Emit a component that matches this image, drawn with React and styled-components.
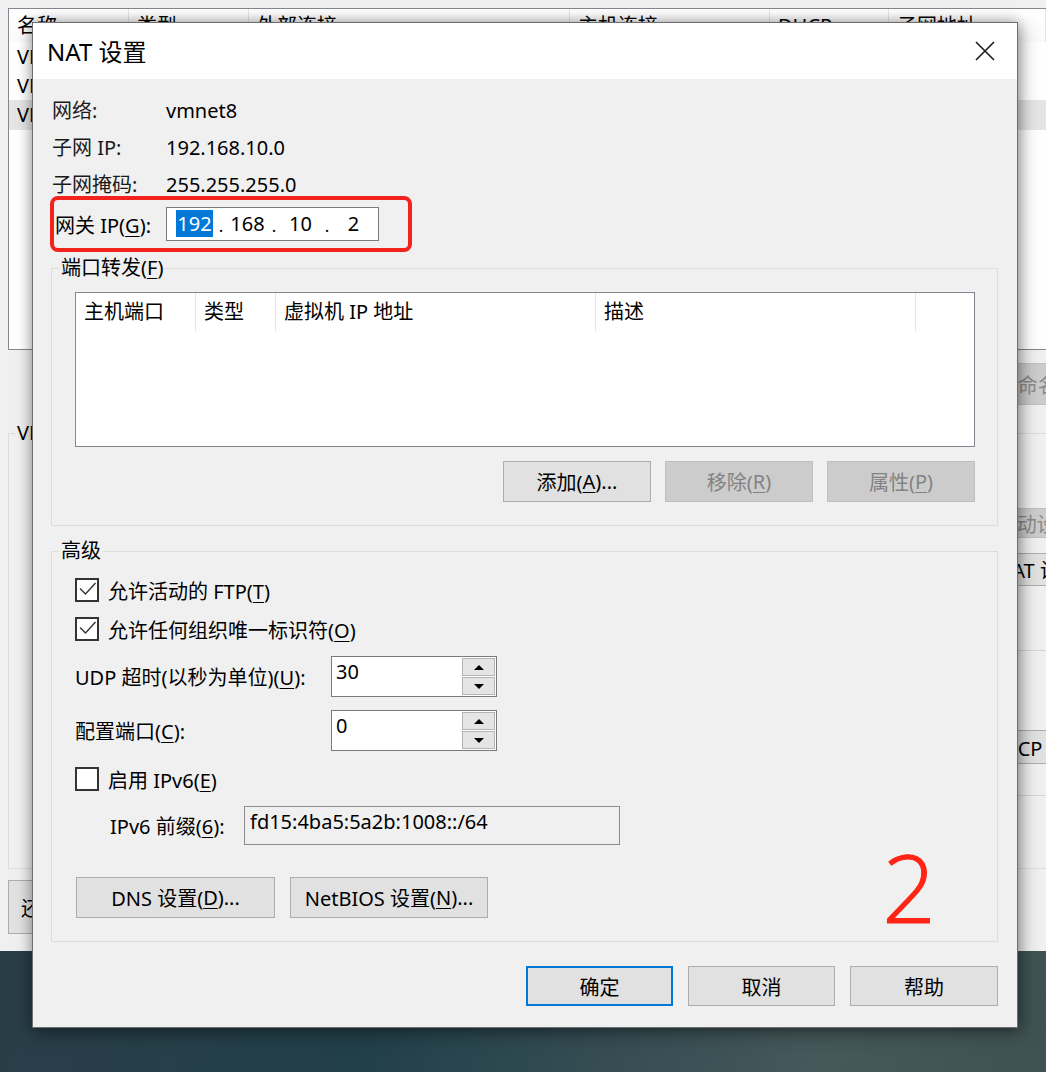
import React from 'react';
import styled, { createGlobalStyle } from 'styled-components';

const GlobalStyle = createGlobalStyle`
  html, body {
    margin: 0;
    padding: 0;
  }
  body {
    width: 1046px;
    height: 1072px;
    overflow: hidden;
    font-family: "Noto Sans", "Noto Sans CJK SC", sans-serif;
    font-size: 20px;
    color: #000;
    background: linear-gradient(95deg, #2b3d47 0%, #22404a 40%, #46585a 80%, #3f5252 100%);
  }
  * {
    box-sizing: border-box;
  }
`;

const Screen = styled.div`
  position: relative;
  width: 1046px;
  height: 1072px;
  overflow: hidden;
`;

/* ---------- window behind the dialog ---------- */

const BgWindow = styled.div`
  height: 951px;
  background: #f0f0f0;
  padding: 8px 0 0 8px;
  display: flex;
  flex-direction: column;
`;

const ListView = styled.div`
  height: 342px;
  background: #fff;
  border: 1px solid #828790;
  border-right: none;
  display: flex;
  flex-direction: column;
`;

const columns = '120px 120px 321px 200px 119px 1fr';

const ListHead = styled.div`
  display: grid;
  grid-template-columns: ${columns};
  height: 33px;
  background: linear-gradient(#fff, #fafafa);
`;

const HeadCell = styled.div`
  padding-left: 8px;
  line-height: 33px;
  border-right: 1px solid #e5e5e5;
  white-space: nowrap;
  overflow: hidden;
`;

const ListRow = styled.div`
  display: grid;
  grid-template-columns: ${columns};
  height: ${(p) => (p.$last ? 30 : 29)}px;
  line-height: ${(p) => (p.$last ? 30 : 29)}px;
  background: ${(p) => (p.$selected ? '#e5e5e5' : 'transparent')};
`;

const RowCell = styled.div`
  padding-left: 8px;
  white-space: nowrap;
  overflow: hidden;
`;

const BgButtonBar = styled.div`
  display: flex;
  justify-content: flex-end;
  gap: 12px;
  margin: 13px -120px 0 0;
`;

const BgButton = styled.div`
  width: ${(p) => p.$w || 170}px;
  height: ${(p) => p.$h || 42}px;
  display: flex;
  align-items: center;
  justify-content: ${(p) => (p.$left ? 'flex-start' : 'center')};
  padding-left: ${(p) => (p.$left ? 12 : 0)}px;
  white-space: nowrap;
  background: ${(p) => (p.$disabled ? '#cccccc' : '#e1e1e1')};
  color: ${(p) => (p.$disabled ? '#8a8a8a' : '#000')};
  border: 1px solid ${(p) => (p.$disabled ? '#bfbfbf' : '#adadad')};
  margin-top: ${(p) => p.$mt || 0}px;
`;

const VmGroup = styled.fieldset`
  margin: 17px -100px 0 0;
  padding: 0;
  height: 447px;
  border: 1px solid #dcdcdc;
  min-width: 0;
  display: flex;
  flex-direction: column;
  align-items: flex-end;
`;

const BgLegend = styled.legend`
  padding: 0 2px;
  margin-left: 6px;
  line-height: 22px;
`;

const SideColumn = styled.div`
  width: 170px;
  margin-right: 2px;
  display: flex;
  flex-direction: column;
`;

const SideLine = styled.div`
  height: 1px;
  background: #d5d5d5;
  margin-top: ${(p) => p.$mt}px;
  margin-left: 40px;
`;

const BgFooter = styled.div`
  margin-top: 11px;
  display: flex;
`;

/* ---------- NAT dialog ---------- */

const Dialog = styled.div`
  position: absolute;
  left: 32px;
  top: 22px;
  width: 986px;
  height: 1006px;
  background: #f0f0f0;
  border: 1px solid #6e6e6e;
  box-shadow: 0 0 12px rgba(0, 0, 0, 0.3), 3px 5px 18px rgba(0, 0, 0, 0.3);
  display: flex;
  flex-direction: column;
`;

const TitleBar = styled.div`
  height: 56px;
  background: #fff;
  display: flex;
  align-items: center;
  justify-content: space-between;
  padding: 0 22px 0 14px;
`;

const Title = styled.div`
  font-size: 24px;
  line-height: 1;
  margin-top: 2px;
`;

const Body = styled.div`
  flex: 1;
  display: flex;
  flex-direction: column;
  padding: 0 19px 20px 18px;
`;

const Info = styled.div`
  display: grid;
  grid-template-columns: 114px auto;
  row-gap: 13px;
  margin: 20px 0 0 1px;
  line-height: 24px;
`;

const Label = styled.div`
  color: #1a1a1a;
  white-space: nowrap;
`;

const Key = styled.span`
  text-decoration: underline;
  text-underline-offset: 3px;
  text-decoration-thickness: 1px;
`;

const GatewayMark = styled.div`
  width: 362px;
  height: 56px;
  margin: -1px 0 0 -1px;
  border: 4px solid #f2231d;
  border-radius: 8px;
  display: flex;
  align-items: center;
  padding-left: 1px;
`;

const GatewayLabel = styled.div`
  width: 111px;
  white-space: nowrap;
`;

const IpInput = styled.div`
  width: 213px;
  height: 34px;
  background: #fff;
  border: 1px solid #7a7a7a;
  display: flex;
  align-items: center;
  padding-left: 5px;
`;

const IpField = styled.div`
  width: 45px;
  text-align: center;
  line-height: 24px;
`;

const Selected = styled.span`
  background: #0078d7;
  color: #fff;
  padding: 0 1px;
`;

const IpDot = styled.div`
  width: 8px;
  text-align: center;
  line-height: 24px;
  font-size: 17px;
  padding-top: 3px;
`;

const Group = styled.fieldset`
  position: relative;
  margin: ${(p) => p.$mt}px 0 0 0;
  padding: 13px 22px 23px 23px;
  border: 1px solid #dcdcdc;
  min-width: 0;
  display: flex;
  flex-direction: column;
`;

const Legend = styled.legend`
  padding: 0 2px;
  margin-left: -16px;
  line-height: 22px;
`;

const PortList = styled.div`
  height: 155px;
  background: #fff;
  border: 1px solid #828790;
`;

const PortHead = styled.div`
  display: grid;
  grid-template-columns: 120px 80px 320px 320px 1fr;
  height: 34px;
`;

const PortHeadCell = styled.div`
  padding-left: 8px;
  line-height: 38px;
  border-right: ${(p) => (p.$last ? 'none' : '1px solid #e5e5e5')};
  white-space: nowrap;
`;

const ButtonRow = styled.div`
  display: flex;
  justify-content: ${(p) => (p.$start ? 'flex-start' : 'flex-end')};
  gap: ${(p) => p.$gap || 14}px;
  margin-top: ${(p) => p.$mt}px;
  margin-left: ${(p) => p.$ml || 0}px;
`;

const Button = styled.div`
  width: ${(p) => p.$w}px;
  height: ${(p) => p.$h || 41}px;
  display: flex;
  align-items: center;
  justify-content: center;
  white-space: nowrap;
  background: ${(p) => (p.$disabled ? '#cccccc' : '#e1e1e1')};
  color: ${(p) => (p.$disabled ? '#838383' : '#000')};
  border: ${(p) =>
    p.$default ? '2px solid #0078d7' : `1px solid ${p.$disabled ? '#bfbfbf' : '#adadad'}`};
`;

const CheckRow = styled.div`
  display: flex;
  align-items: center;
  gap: 9px;
  height: 30px;
  margin-top: ${(p) => p.$mt || 0}px;
`;

const Box = styled.div`
  width: 24px;
  height: 24px;
  border: 2px solid #333;
  background: #fff;
  display: flex;
  align-items: center;
  justify-content: center;
`;

const FieldRow = styled.div`
  display: flex;
  align-items: center;
  margin-top: ${(p) => p.$mt}px;
  margin-left: ${(p) => p.$ml || 0}px;
`;

const FieldLabel = styled.div`
  width: ${(p) => p.$w}px;
  white-space: nowrap;
`;

const Spin = styled.div`
  width: 166px;
  height: 41px;
  display: flex;
  background: #fff;
  border: 1px solid #7a7a7a;
`;

const SpinText = styled.div`
  flex: 1;
  padding: 3px 4px 0;
  line-height: 24px;
`;

const SpinButtons = styled.div`
  width: 34px;
  display: flex;
  flex-direction: column;
  gap: 1px;
  padding: 1px 1px 1px 0;
  background: #fff;
`;

const SpinButton = styled.div`
  flex: 1;
  background: #e5e5e5;
  border: 1px solid #b4b4b4;
  display: flex;
  align-items: center;
  justify-content: center;
`;

const Arrow = styled.div`
  width: 0;
  height: 0;
  border-left: 5px solid transparent;
  border-right: 5px solid transparent;
  ${(p) => (p.$down ? 'border-top: 5px solid #000;' : 'border-bottom: 5px solid #000;')}
`;

const PrefixBox = styled.div`
  width: 376px;
  height: 39px;
  border: 1px solid #8c8c8c;
  background: #f0f0f0;
  padding: 3px 5px 0;
  line-height: 24px;
`;

const Annotation = styled.div`
  position: absolute;
  right: 61px;
  top: 277px;
  font-family: "Open Sans", "Noto Sans", sans-serif;
  font-weight: 300;
  font-size: 94px;
  line-height: 96px;
  color: #ff2414;
  -webkit-text-stroke: 1px #ff2414;
`;

const Footer = styled.div`
  display: flex;
  justify-content: flex-end;
  gap: 15px;
  margin-top: 24px;
`;

const CheckMark = () => (
  <svg width="20" height="20" viewBox="0 0 20 20">
    <polyline points="3,8.5 8.5,14 18.5,3" fill="none" stroke="#333" strokeWidth="1.4" />
  </svg>
);

const CloseIcon = () => (
  <svg width="20" height="20" viewBox="0 0 20 20">
    <path d="M1 1 L19 19 M19 1 L1 19" stroke="#1a1a1a" strokeWidth="1.6" />
  </svg>
);

const Checkbox = ({ checked, children, mt }) => (
  <CheckRow $mt={mt}>
    <Box>{checked && <CheckMark />}</Box>
    <span>{children}</span>
  </CheckRow>
);

const SpinBox = ({ value }) => (
  <Spin>
    <SpinText>{value}</SpinText>
    <SpinButtons>
      <SpinButton>
        <Arrow />
      </SpinButton>
      <SpinButton>
        <Arrow $down />
      </SpinButton>
    </SpinButtons>
  </Spin>
);

// only the first column peeks out from under the dialog
const networks = ['VMnet0', 'VMnet1', 'VMnet8'];

const Background = () => (
  <BgWindow>
    <ListView>
      <ListHead>
        {['名称', '类型', '外部连接', '主机连接', 'DHCP', '子网地址'].map((h) => (
          <HeadCell key={h}>{h}</HeadCell>
        ))}
      </ListHead>
      {networks.map((n, i) => (
        <ListRow key={n} $selected={i === 2} $last={i === 2}>
          <RowCell>{n}</RowCell>
        </ListRow>
      ))}
    </ListView>
    <BgButtonBar>
      <BgButton $w={190}>添加网络(E)...</BgButton>
      <BgButton $w={190}>移除网络(O)</BgButton>
      <BgButton $w={190} $disabled>
        重命名网络(W)...
      </BgButton>
    </BgButtonBar>
    <VmGroup>
      <BgLegend>VMnet 信息</BgLegend>
      <SideColumn>
        <BgButton $h={30} $mt={64} $disabled>
          自动设置(U)...
        </BgButton>
        <BgButton $h={33} $mt={15}>
          NAT 设置(S)...
        </BgButton>
        <SideLine $mt={64} />
        <BgButton $h={34} $mt={79}>
          DHCP 设置(P)...
        </BgButton>
        <SideLine $mt={31} />
      </SideColumn>
    </VmGroup>
    <BgFooter>
      <BgButton $w={230} $h={54} $left>
        还原默认设置(R)
      </BgButton>
    </BgFooter>
  </BgWindow>
);

const App = () => (
  <>
    <GlobalStyle />
    <Screen>
      <Background />
      <Dialog>
        <TitleBar>
          <Title>NAT 设置</Title>
          <CloseIcon />
        </TitleBar>
        <Body>
          <Info>
            <Label>网络:</Label>
            <div>vmnet8</div>
            <Label>子网 IP:</Label>
            <div>192.168.10.0</div>
            <Label>子网掩码:</Label>
            <div>255.255.255.0</div>
          </Info>

          <GatewayMark>
            <GatewayLabel>
              网关 IP(<Key>G</Key>):
            </GatewayLabel>
            <IpInput>
              <IpField>
                <Selected>192</Selected>
              </IpField>
              <IpDot>.</IpDot>
              <IpField>168</IpField>
              <IpDot>.</IpDot>
              <IpField>10</IpField>
              <IpDot>.</IpDot>
              <IpField>2</IpField>
            </IpInput>
          </GatewayMark>

          <Group $mt={5}>
            <Legend>
              端口转发(<Key>F</Key>)
            </Legend>
            <PortList>
              <PortHead>
                <PortHeadCell>主机端口</PortHeadCell>
                <PortHeadCell>类型</PortHeadCell>
                <PortHeadCell>虚拟机 IP 地址</PortHeadCell>
                <PortHeadCell>描述</PortHeadCell>
                <PortHeadCell $last />
              </PortHead>
            </PortList>
            <ButtonRow $mt={14}>
              <Button $w={148}>
                添加(<Key>A</Key>)...
              </Button>
              <Button $w={148} $disabled>
                移除(<Key>R</Key>)
              </Button>
              <Button $w={148} $disabled>
                属性(<Key>P</Key>)
              </Button>
            </ButtonRow>
          </Group>

          <Group $mt={14}>
            <Legend>高级</Legend>
            <Checkbox checked>
              允许活动的 FTP(<Key>T</Key>)
            </Checkbox>
            <Checkbox checked mt={9}>
              允许任何组织唯一标识符(<Key>O</Key>)
            </Checkbox>
            <FieldRow $mt={12}>
              <FieldLabel $w={256}>
                UDP 超时(以秒为单位)(<Key>U</Key>):
              </FieldLabel>
              <SpinBox value="30" />
            </FieldRow>
            <FieldRow $mt={13}>
              <FieldLabel $w={256}>
                配置端口(<Key>C</Key>):
              </FieldLabel>
              <SpinBox value="0" />
            </FieldRow>
            <Checkbox mt={13}>
              启用 IPv6(<Key>E</Key>)
            </Checkbox>
            <FieldRow $mt={12} $ml={35}>
              <FieldLabel $w={134}>
                IPv6 前缀(<Key>6</Key>):
              </FieldLabel>
              <PrefixBox>fd15:4ba5:5a2b:1008::/64</PrefixBox>
            </FieldRow>
            <ButtonRow $start $gap={15} $mt={32} $ml={1}>
              <Button $w={199}>
                DNS 设置(<Key>D</Key>)...
              </Button>
              <Button $w={198}>
                NetBIOS 设置(<Key>N</Key>)...
              </Button>
            </ButtonRow>
            <Annotation>2</Annotation>
          </Group>

          <Footer>
            <Button $w={147} $h={40} $default>
              确定
            </Button>
            <Button $w={147} $h={40}>
              取消
            </Button>
            <Button $w={148} $h={40}>
              帮助
            </Button>
          </Footer>
        </Body>
      </Dialog>
    </Screen>
  </>
);

export default App;
